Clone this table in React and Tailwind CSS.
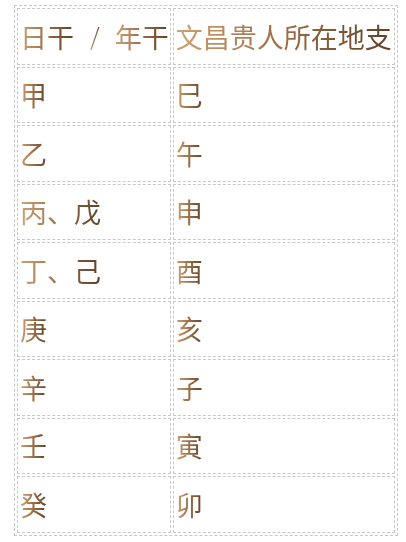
import React from 'react'

const rows = [
  [['甲'], ['巳']],
  [['乙'], ['午']],
  [['丙、戊'], ['申']],
  [['丁、己'], ['酉']],
  [['庚'], ['亥']],
  [['辛'], ['子']],
  [['壬'], ['寅']],
  [['癸'], ['卯']],
]

const Gold = ({ children, className = '' }) => (
  <span
    className={`bg-gradient-to-r from-[#cfa274] via-[#9a6d45] to-[#5f4127] bg-clip-text text-transparent ${className}`}
  >
    {children}
  </span>
)

const Cell = ({ parts }) => (
  <td className="h-[56.5px] border border-dashed border-[#c8c8c8] pl-[2px] pr-[2px] align-middle leading-none whitespace-nowrap">
    {parts.map((p, i) => (
      <Gold key={i}>{p}</Gold>
    ))}
  </td>
)

export default function App() {
  return (
    <div
      className="bg-white w-[406px] h-[542px] pt-[5px] pl-[14px]"
      style={{ fontFamily: '"Noto Sans CJK SC", "Noto Sans", sans-serif' }}
    >
      <table className="border border-dashed border-[#c8c8c8] border-separate border-spacing-[2px] text-[27px] text-[#7a5535]">
        <tbody>
          <tr>
            <td className="h-[56.5px] border border-dashed border-[#c8c8c8] pl-[2px] pr-[1px] align-middle leading-none whitespace-nowrap">
              <Gold>日干</Gold>
              <Gold className="mx-[15px] inline-block font-light">/</Gold>
              <Gold>年干</Gold>
            </td>
            <Cell parts={['文昌贵人所在地支']} />
          </tr>
          {rows.map((r, i) => (
            <tr key={i}>
              <Cell parts={r[0]} />
              <Cell parts={r[1]} />
            </tr>
          ))}
        </tbody>
      </table>
    </div>
  )
}
